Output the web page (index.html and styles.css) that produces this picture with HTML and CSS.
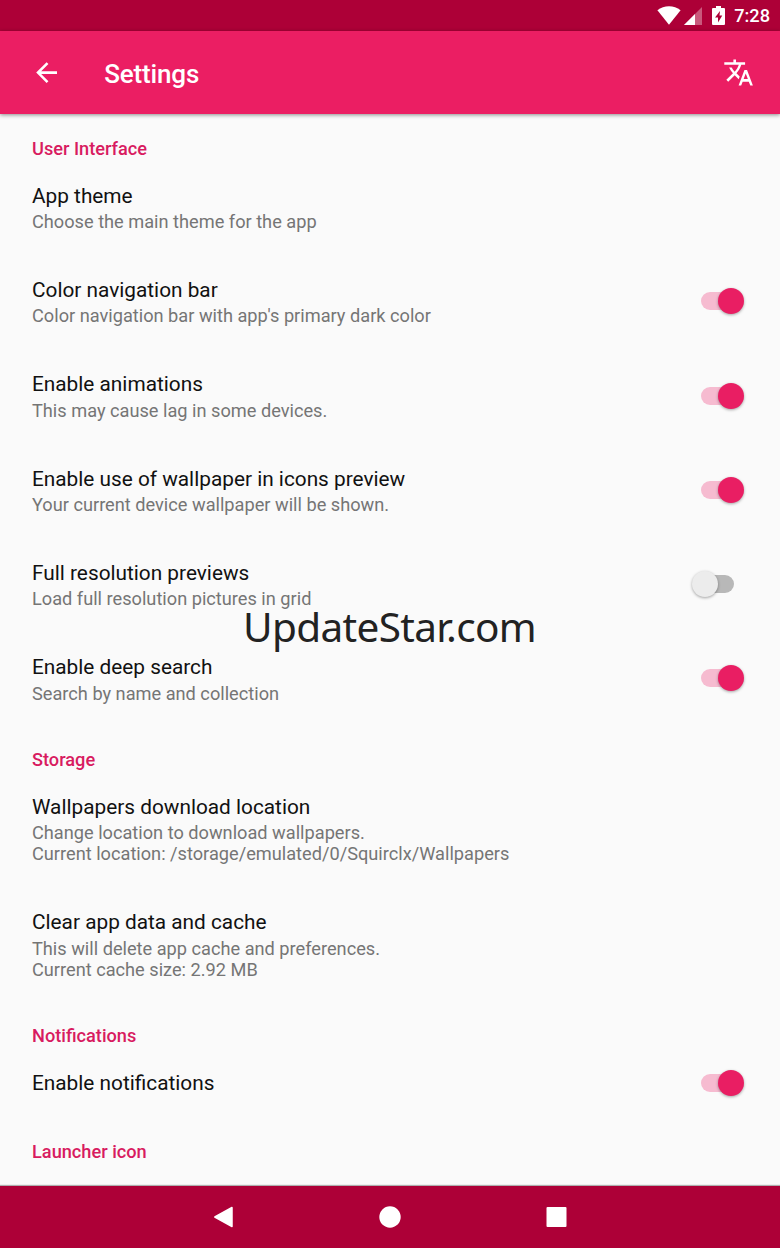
FILE: index.html
```html
<!DOCTYPE html>
<html lang="en">

<head>
  <meta charset="UTF-8">
  <meta name="viewport" content="width=device-width, initial-scale=1.0">
  <title>Settings</title>
  <link rel="stylesheet" href="styles.css">
</head>

<body>
  <div class="screen">
    <div class="status-bar">
      <svg class="icon-wifi" width="24" height="19" viewBox="0 0 24 19">
        <path d="M0.4 4.2C3.8 1.5 7.8.2 12 .2s8.200 1.300 11.600 4L12 18.700z" />
      </svg>
      <svg class="icon-signal" width="18" height="18" viewBox="0 0 18 18">
        <path d="M18 0v18H0z" opacity=".35" />
        <path d="M11 7v11H0z" />
      </svg>
      <svg class="icon-battery" width="13" height="19" viewBox="0 0 13 19">
        <path fill-rule="evenodd" d="M4 0h5v2h3q1 0 1 1v15q0 1-1 1H1q-1 0-1-1V3q0-1 1-1h3zM8 5L3 11.500h3V16.500L10.300 9.500H7.500z" />
      </svg>
      <span class="clock">7:28</span>
    </div>

    <header class="toolbar">
      <svg class="icon" viewBox="0 0 24 24">
        <path d="M20 11H7.830l5.590-5.590L12 4l-8 8 8 8 1.410-1.410L7.830 13H20v-2z" />
      </svg>
      <h1 class="toolbar-title">Settings</h1>
      <svg class="icon" viewBox="0 0 24 24">
        <path d="M12.870 15.070l-2.540-2.510.03-.03c1.740-1.940 2.980-4.170 3.710-6.530H17V4h-7V2H8v2H1v1.990h11.170C11.500 7.920 10.440 9.750 9 11.350 8.070 10.320 7.300 9.190 6.690 8h-2c.73 1.630 1.730 3.170 2.980 4.560l-5.090 5.020L4 19l5-5 3.110 3.110.76-2.040zM18.500 10h-2L12 22h2l1.120-3h4.750L21 22h2l-4.500-12zm-2.620 7l1.620-4.330L19.120 17h-3.240z" />
      </svg>
    </header>

    <main class="content">
      <h2 class="category">User Interface</h2>
      <div class="pref">
        <div class="pref-text">
          <div class="pref-title">App theme</div>
          <div class="pref-summary">Choose the main theme for the app</div>
        </div>
      </div>
      <div class="pref">
        <div class="pref-text">
          <div class="pref-title">Color navigation bar</div>
          <div class="pref-summary">Color navigation bar with app's primary dark color</div>
        </div>
        <div class="switch on"></div>
      </div>
      <div class="pref">
        <div class="pref-text">
          <div class="pref-title">Enable animations</div>
          <div class="pref-summary">This may cause lag in some devices.</div>
        </div>
        <div class="switch on"></div>
      </div>
      <div class="pref">
        <div class="pref-text">
          <div class="pref-title">Enable use of wallpaper in icons preview</div>
          <div class="pref-summary">Your current device wallpaper will be shown.</div>
        </div>
        <div class="switch on"></div>
      </div>
      <div class="pref">
        <div class="pref-text">
          <div class="pref-title">Full resolution previews</div>
          <div class="pref-summary">Load full resolution pictures in grid</div>
        </div>
        <div class="switch"></div>
      </div>
      <div class="pref">
        <div class="pref-text">
          <div class="pref-title">Enable deep search</div>
          <div class="pref-summary">Search by name and collection</div>
        </div>
        <div class="switch on"></div>
      </div>

      <h2 class="category">Storage</h2>
      <div class="pref">
        <div class="pref-text">
          <div class="pref-title">Wallpapers download location</div>
          <div class="pref-summary">Change location to download wallpapers.<br>Current location: /storage/emulated/0/Squirclx/Wallpapers</div>
        </div>
      </div>
      <div class="pref">
        <div class="pref-text">
          <div class="pref-title">Clear app data and cache</div>
          <div class="pref-summary">This will delete app cache and preferences.<br>Current cache size: 2.92 MB</div>
        </div>
      </div>

      <h2 class="category">Notifications</h2>
      <div class="pref pref-single">
        <div class="pref-text">
          <div class="pref-title">Enable notifications</div>
        </div>
        <div class="switch on"></div>
      </div>

      <h2 class="category">Launcher icon</h2>
    </main>

    <nav class="nav-bar">
      <svg width="22" height="22" viewBox="0 0 22 22">
        <path d="M19 1.500v19L1.800 11z" stroke="#fff" stroke-width="1.500" stroke-linejoin="round" />
      </svg>
      <svg width="22" height="22" viewBox="0 0 22 22">
        <circle cx="11" cy="11" r="10.700" />
      </svg>
      <svg width="22" height="22" viewBox="0 0 22 22">
        <rect x="0.500" y="1" width="20" height="20" rx="1" />
      </svg>
    </nav>

    <div class="watermark">UpdateStar.com</div>
  </div>
</body>

</html>
```

FILE: styles.css
```css
* {
  margin: 0;
  padding: 0;
  box-sizing: border-box;
}

body {
  font-family: Roboto, "Liberation Sans", sans-serif;
  background-color: #fafafa;
}

svg {
  display: block;
  flex: none;
  fill: #fff;
}

.screen {
  position: relative;
  display: flex;
  flex-direction: column;
  width: 780px;
  height: 1248px;
  overflow: hidden;
}

/* status bar */
.status-bar {
  display: flex;
  flex: none;
  justify-content: flex-end;
  align-items: center;
  height: 31px;
  padding-right: 10px;
  background-color: #ad0037;
}

.icon-signal {
  margin-left: 3px;
}

.icon-battery {
  margin-left: 10px;
}

.clock {
  margin-left: 9px;
  padding-top: 1px;
  font-size: 18.2px;
  font-weight: 500;
  line-height: 30px;
  color: #fff;
}

/* toolbar */
.toolbar {
  z-index: 1;
  display: flex;
  flex: none;
  align-items: center;
  height: 83px;
  padding: 0 26px 0 31px;
  background-color: #eb1e63;
  box-shadow: 0 1px 4px rgba(0, 0, 0, 0.45);
}

.icon {
  width: 31.2px;
  height: 31.2px;
}

.toolbar-title {
  flex: 1;
  padding: 3px 0 0 42px;
  font-size: 26px;
  font-weight: 500;
  line-height: 30px;
  letter-spacing: -0.15px;
  color: #fff;
}

/* preferences */
.content {
  flex: 1;
  min-height: 0;
  overflow: hidden;
}

.category {
  height: 45px;
  padding: 24px 32px 0;
  font-size: 18.2px;
  font-weight: 500;
  line-height: 21px;
  color: #d81b60;
}

.pref {
  display: flex;
  align-items: center;
  padding: 24.9px 36px 20.6px 32px;
}

.pref-single {
  padding: 24.9px 36px 18.1px 32px;
}

.pref-text {
  flex: 1;
}

.pref-title {
  margin-bottom: 3.1px;
  font-size: 20.8px;
  line-height: 24.2px;
  color: #111;
}

.pref-summary {
  font-size: 18.2px;
  line-height: 21.5px;
  color: #757575;
}

.switch {
  position: relative;
  width: 53px;
  height: 18px;
  margin-bottom: 2.600px;
}

.switch::before {
  content: "";
  display: block;
  width: 33px;
  height: 18px;
  margin: 0 10px;
  border-radius: 9px;
  background-color: #b8b8b8;
}

.switch::after {
  content: "";
  position: absolute;
  top: -4px;
  left: 1px;
  width: 26px;
  height: 26px;
  border-radius: 50%;
  background-color: #ececec;
  box-shadow: 0 1px 3px rgba(0, 0, 0, 0.35);
}

.switch.on::before {
  width: 36px;
  background-color: #f6bbd0;
}

.switch.on::after {
  left: 26.500px;
  background-color: #e91e63;
}

/* bottom navigation */
.nav-bar {
  display: flex;
  flex: none;
  justify-content: center;
  align-items: center;
  gap: 144.5px;
  height: 62px;
  background-color: #ad0037;
  box-shadow: 0 -1px 1px rgba(0, 0, 0, 0.3);
}

.watermark {
  position: absolute;
  top: 599px;
  left: 243px;
  font-family: "Noto Sans", "Open Sans", sans-serif;
  font-size: 40.5px;
  line-height: 56px;
  letter-spacing: -0.65px;
  white-space: nowrap;
  color: #222;
}
```
